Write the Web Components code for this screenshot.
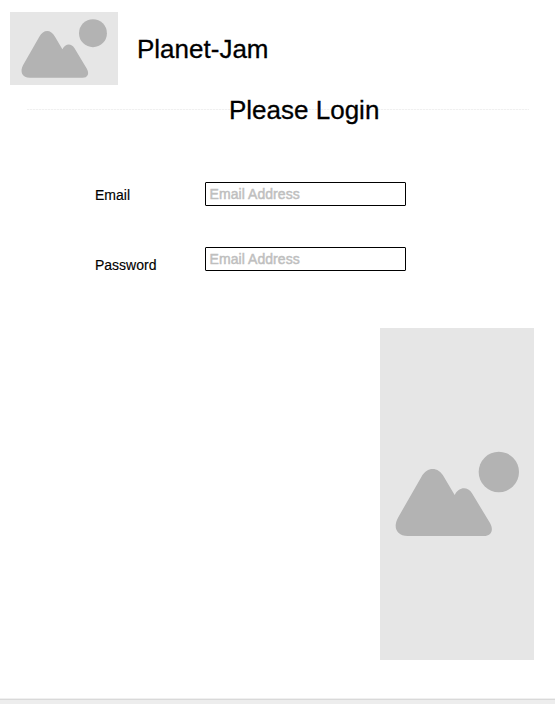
<!DOCTYPE html>
<html lang="en">
<head>
<meta charset="utf-8">
<title>Planet-Jam</title>
<style>
html,body{margin:0;height:100%;background:#fff}
</style>
</head>
<body>
<login-page></login-page>
<script>
class ImagePlaceholder extends HTMLElement {
  connectedCallback() {
    this.attachShadow({mode: 'open'}).innerHTML = `
      <style>
        :host{display:block;background:#e6e6e6;flex:none}
        svg{display:block;width:100%;height:100%;fill:#b3b3b3}
      </style>
      <svg viewBox="${this.getAttribute('view')}" preserveAspectRatio="none" aria-hidden="true">
        <path d="M84 263 L154 141 C172 109 204 109 222 141 L254 195 C266 170 293 168 306 190 L360 279 C373 302 362 318 342 318 H113 C80 318 68 292 84 263 Z"/>
        <circle cx="386.5" cy="126" r="60.5"/>
      </svg>`;
  }
}
customElements.define('image-placeholder', ImagePlaceholder);

class SectionTitle extends HTMLElement {
  connectedCallback() {
    this.attachShadow({mode: 'open'}).innerHTML = `
      <style>
        :host{display:grid;align-items:center;height:30px;margin:10px 26px 0 27px}
        .rule{grid-area:1/1;height:1px;margin-bottom:2px;background:repeating-linear-gradient(90deg,#f0f0f0 0 2px,#fafafa 2px 3px)}
        h2{grid-area:1/1;margin:0 0 0 202px;font-size:26px;line-height:30px;font-weight:400;white-space:nowrap;-webkit-text-stroke:.3px #000}
      </style>
      <div class="rule"></div><h2><slot></slot></h2>`;
  }
}
customElements.define('section-title', SectionTitle);

class LoginField extends HTMLElement {
  connectedCallback() {
    this.attachShadow({mode: 'open'}).innerHTML = `
      <style>
        :host{display:grid;grid-template-columns:110px 201px;align-items:start}
        .label{font-size:14px;line-height:16px;padding-top:var(--label-top,5px);-webkit-text-stroke:.15px #000}
        .box{box-sizing:border-box;height:24px;border:1px solid #000;border-radius:1px;padding:0 3.6px;font-size:14px;line-height:22px;letter-spacing:.05px;color:#bfbfbf;-webkit-text-stroke:.5px #bfbfbf;white-space:nowrap}
      </style>
      <div class="label"><slot></slot></div><div class="box"><slot name="hint"></slot></div>`;
  }
}
customElements.define('login-field', LoginField);

class LoginPage extends HTMLElement {
  connectedCallback() {
    this.attachShadow({mode: 'open'}).innerHTML = `
      <style>
        :host{display:flex;flex-direction:column;height:704px;overflow:hidden;color:#000;font-family:"Liberation Sans",Arial,sans-serif}
        header{display:flex;gap:19px;padding:12px 0 0 10px;height:73px}
        header image-placeholder{width:108px;height:73px}
        h1{margin:22px 0 0;font-size:26px;line-height:30px;font-weight:400;-webkit-text-stroke:.3px #000}
        form{display:grid;gap:41px;padding:57px 0 0 95px}
        .second{--label-top:10px}
        .side{width:154px;height:332px;align-self:flex-end;margin:55px 21px 0 0}
        footer{margin-top:auto;height:4px;background:#ededed;border-top:1px solid #d9d9d9;box-shadow:0 -1px #f0f0f0}
      </style>
      <header>
        <image-placeholder view="27 34.5 468 315"></image-placeholder>
        <h1>Planet-Jam</h1>
      </header>
      <section-title>Please Login</section-title>
      <form>
        <login-field>Email<span slot="hint">Email Address</span></login-field>
        <login-field class="second">Password<span slot="hint">Email Address</span></login-field>
      </form>
      <image-placeholder class="side" view="30 -306 462 996"></image-placeholder>
      <footer></footer>`;
  }
}
customElements.define('login-page', LoginPage);
</script>
</body>
</html>
